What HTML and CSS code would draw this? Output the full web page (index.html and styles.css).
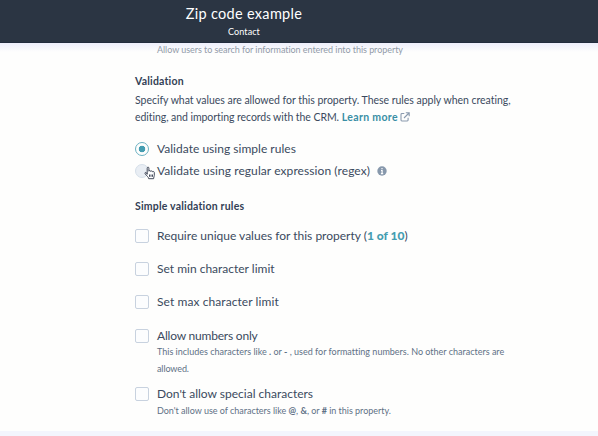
FILE: index.html
```
<!DOCTYPE html>
<html lang="en">
<head>
<meta charset="utf-8">
<title>Zip code example</title>
<link rel="stylesheet" href="styles.css">
</head>
<body>
<header class="header">
  <h1 class="title">Zip code example</h1>
  <p class="subtitle">Contact</p>
</header>
<main class="panel">
  <p class="help first"><span class="l-search">Allow users to search for information entered into this property</span></p>
  <h2 class="heading"><span class="h-validation">Validation</span></h2>
  <p class="intro"><span class="l-specify">Specify what values are allowed for this property. These rules apply when creating,</span><br><span class="l-editing">editing, and importing records with the CRM.</span> <a class="link">Learn more</a><svg class="external" viewBox="0 0 10 10"><path d="M4.3 1.5H1.9Q1 1.5 1 2.4v5.7q0 .9.9.9h5.3q.9 0 .9-.9V5.8M5.8.8h3.4v3.4M9 1 4 6"/></svg></p>
  <div class="radios">
    <div class="option"><i class="radio selected"></i><span class="label l-simple">Validate using simple rules</span></div>
    <div class="option"><i class="radio hovered"><svg class="cursor" viewBox="0 0 12 14"><path d="M3.2 8.3V2.2c0-1.5 1.7-1.5 1.7 0v3c.2-.9 1.7-.9 1.8.2.3-.8 1.7-.7 1.8.4.4-.7 1.8-.4 1.8.8v2.8c0 1-.7 1.8-.7 3.3H4.7C4.5 11 2.6 9.8 1.2 7.9.4 6.6 1.8 5.9 2.5 6.9z"/><path d="M5.5 8.5v2.3M7 8.5v2.3M8.5 8.5v2.3"/></svg></i><span class="label l-regex">Validate using regular expression (regex)</span><svg class="info" viewBox="0 0 10 10"><circle cx="5" cy="5" r="4.7"/><path d="M5 2v1.3M4 4.5h1.1V7.5M3.9 7.6h2.3"/></svg></div>
  </div>
  <h2 class="heading rules"><span class="h-rules">Simple validation rules</span></h2>
  <div class="checks">
    <div class="option"><i class="box"></i><span class="label l-unique">Require unique values for this property (<b>1 of 10</b>)</span></div>
    <div class="option"><i class="box"></i><span class="label l-min">Set min character limit</span></div>
    <div class="option"><i class="box"></i><span class="label l-max">Set max character limit</span></div>
    <div class="option"><i class="box"></i><span class="label l-numbers">Allow numbers only</span></div>
  </div>
  <p class="help detail"><span class="l-includes">This includes characters like <b>.</b> or <b>-</b> , used for formatting numbers. No other characters are</span><br><span class="l-allowed">allowed.</span></p>
  <div class="option special"><i class="box"></i><span class="label l-special">Don't allow special characters</span></div>
  <p class="help last"><span class="l-dont">Don't allow use of characters like <b>@</b>, <b>&amp;</b>, or <b>#</b> in this property.</span></p>
</main>
<footer class="footer"></footer>
</body>
</html>
```
FILE: styles.css
```
* { box-sizing: border-box; }
body {
  margin: 0;
  width: 598px;
  height: 436px;
  overflow: hidden;
  display: flex;
  flex-direction: column;
  background: #fefefd;
  color: #3b4a5e;
  font-family: Lato, "Open Sans", sans-serif;
  font-variant-ligatures: none;
  white-space: nowrap;
}
h1, h2, p { margin: 0; }
.header {
  height: 43px;
  padding: 4px 110px 0 0;
  background: #2b3543;
  border-bottom: 1px solid #232d3e;
  text-align: center;
  color: #fff;
}
.title { font-size: 14.5px; line-height: 20px; font-weight: 400; letter-spacing: .3px; }
.subtitle { font-size: 9px; line-height: 15px; letter-spacing: .1px; }
.panel {
  height: 388px;
  padding-left: 135px;
  background: linear-gradient(#eeeffc, #fefefd 9px);
}
.help { padding-left: 22px; font-size: 9px; line-height: 17px; color: #5f7186; }
.detail { margin-top: -4px; }
.last { margin-top: -3px; }
.first { height: 14px; line-height: 13px; color: #929ba9; }
.heading { margin-top: 16px; font-size: 10.5px; line-height: 16px; font-weight: 700; color: #334155; }
.intro { margin-top: 3px; font-size: 10.5px; line-height: 17px; }
.link { color: #398fa5; font-weight: 700; letter-spacing: .35px; }
.external { width: 10px; height: 10px; margin-left: 2px; vertical-align: -1px; fill: none; stroke: #8a9aae; stroke-width: 1.1; }
.radios { margin-top: 12px; }
.option { display: flex; align-items: center; height: 22px; }
.label { font-size: 12px; line-height: 16px; }
.label b { color: #459db1; font-weight: 900; }
.radio { position: relative; width: 14px; height: 14px; margin-right: 8px; border: 1px solid #d5dfe9; border-radius: 50%; background: #e9eef4; }
.selected { border: 1.5px solid #6bb1c2; background: radial-gradient(circle, #459db1 3px, #fefefd 3.6px); }
.cursor { position: absolute; left: 8px; top: 1px; width: 12px; height: 14px; fill: #fff; stroke: #303849; stroke-width: .9; }
.info { width: 10px; height: 10px; margin-left: 7px; fill: #8798ac; }
.info path { fill: none; stroke: #fff; stroke-width: 1.2; }
.rules { margin-top: 16px; }
.checks { display: grid; row-gap: 11.2px; margin-top: 11px; }
.box { width: 14px; height: 14px; margin-right: 8px; border: 1px solid #c8d2df; border-radius: 2px; background: #fcfdfe; }
.special { margin-top: 6px; }
.footer { flex: 1; background: #f3f5fd; }
.l-search { letter-spacing: -.05px; }
.h-validation, .h-rules { letter-spacing: .2px; }
.l-specify { letter-spacing: -.025px; }
.l-editing { letter-spacing: -.06px; }
.l-simple { letter-spacing: .02px; }
.l-regex { letter-spacing: .08px; }
.l-max { letter-spacing: .08px; }
.l-numbers { letter-spacing: -.2px; }
.l-allowed { letter-spacing: -.1px; }
.l-dont { letter-spacing: -.02px; }
```
